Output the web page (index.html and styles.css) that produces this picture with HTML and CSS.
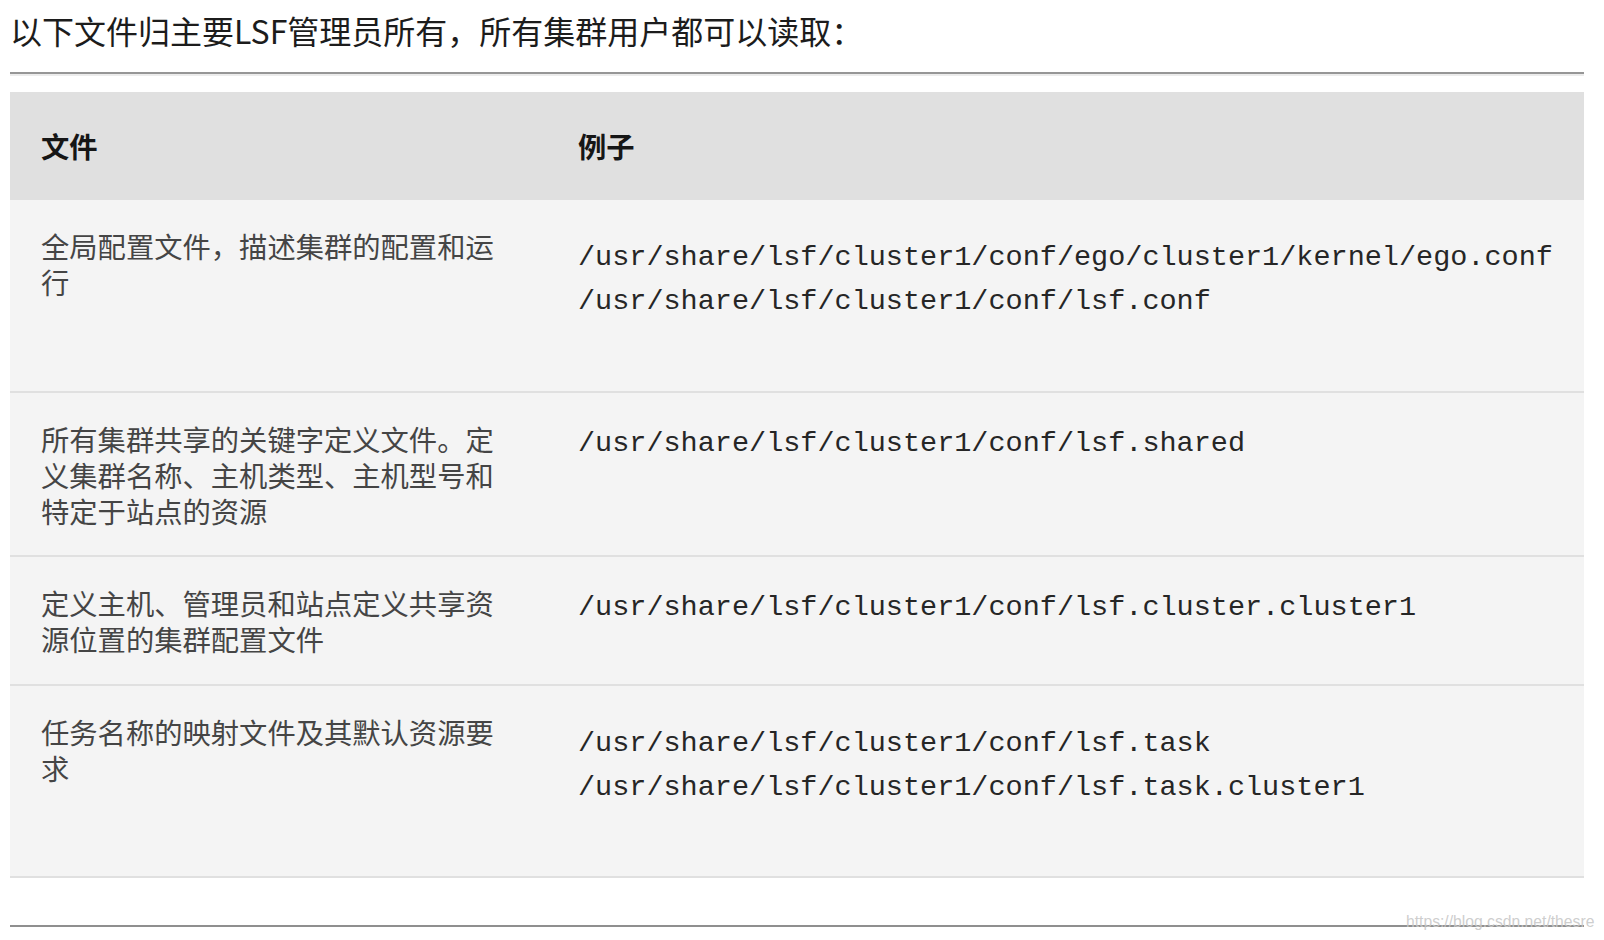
FILE: index.html
```html
<!DOCTYPE html>
<html lang="zh-CN">
<head>
<meta charset="utf-8">
<title>LSF 文件</title>
<link rel="stylesheet" href="styles.css">
</head>
<body>
<div class="page">
  <p class="title">以下文件归主要LSF管理员所有，所有集群用户都可以读取：</p>
  <div class="rule-top"></div>
  <table class="files">
    <colgroup>
      <col class="col-file">
      <col class="col-example">
    </colgroup>
    <thead>
      <tr>
        <th>文件</th>
        <th class="ex">例子</th>
      </tr>
    </thead>
    <tbody>
      <tr>
        <td>全局配置文件，描述集群的配置和运行</td>
        <td class="ex"><div class="paths"><code class="line">/usr/share/lsf/cluster1/conf/ego/cluster1/kernel/ego.conf</code><code class="line">/usr/share/lsf/cluster1/conf/lsf.conf</code></div></td>
      </tr>
      <tr>
        <td>所有集群共享的关键字定义文件。定义集群名称、主机类型、主机型号和特定于站点的资源</td>
        <td class="ex"><code>/usr/share/lsf/cluster1/conf/lsf.shared</code></td>
      </tr>
      <tr>
        <td>定义主机、管理员和站点定义共享资源位置的集群配置文件</td>
        <td class="ex"><code>/usr/share/lsf/cluster1/conf/lsf.cluster.cluster1</code></td>
      </tr>
      <tr>
        <td>任务名称的映射文件及其默认资源要求</td>
        <td class="ex"><div class="paths"><code class="line">/usr/share/lsf/cluster1/conf/lsf.task</code><code class="line">/usr/share/lsf/cluster1/conf/lsf.task.cluster1</code></div></td>
      </tr>
    </tbody>
  </table>
  <div class="rule-bottom"></div>
</div>
<div class="watermark">https://blog.csdn.net/thesre</div>
</body>
</html>
```
FILE: styles.css
```css
html, body {
  margin: 0;
  padding: 0;
  background: #ffffff;
}

body {
  font-family: "Noto Sans CJK SC", "Noto Sans", sans-serif;
  color: #222222;
}

.page {
  width: 1574px;
  padding-left: 10px;
}

.title {
  margin: 0;
  padding-top: 10px;
  font-size: 32px;
  line-height: 40px;
  color: #1c1c1c;
  white-space: nowrap;
}

.rule-top {
  margin-top: 22px;
  height: 2px;
  background: #969696;
  box-shadow: 0 2px 0 #ececec;
}

.files {
  margin-top: 18px;
  width: 1574px;
  border-collapse: collapse;
  table-layout: fixed;
}

.col-file {
  width: 536px;
}

.files th {
  background: #e0e0e0;
  text-align: left;
  font-size: 28.3px;
  font-weight: 700;
  line-height: 36px;
  color: #161616;
  padding: 36px 32px 36px 31px;
}

.files th.ex,
.files td.ex {
  padding-left: 32px;
  padding-right: 16px;
}

.files td {
  background: #f4f4f4;
  vertical-align: top;
  font-size: 28.3px;
  line-height: 36px;
  color: #454545;
  padding: 28px 32px 26.6px 31px;
  border-bottom: 2px solid #e0e0e0;
}

.files code {
  font-family: "Liberation Mono", "DejaVu Sans Mono", monospace;
  font-size: 28.5px;
  color: #262626;
  white-space: nowrap;
}

.paths {
  margin: 8px 0 40px;
}

.files code.line {
  display: block;
  line-height: 44px;
}

.rule-bottom {
  margin-top: 47px;
  height: 2px;
  background: #8f8f8f;
}

.watermark {
  position: absolute;
  left: 1406px;
  top: 912px;
  font-family: "Liberation Sans", Arial, sans-serif;
  font-size: 15.7px;
  line-height: 20px;
  color: rgba(200, 200, 200, 0.9);
  white-space: nowrap;
}
```
